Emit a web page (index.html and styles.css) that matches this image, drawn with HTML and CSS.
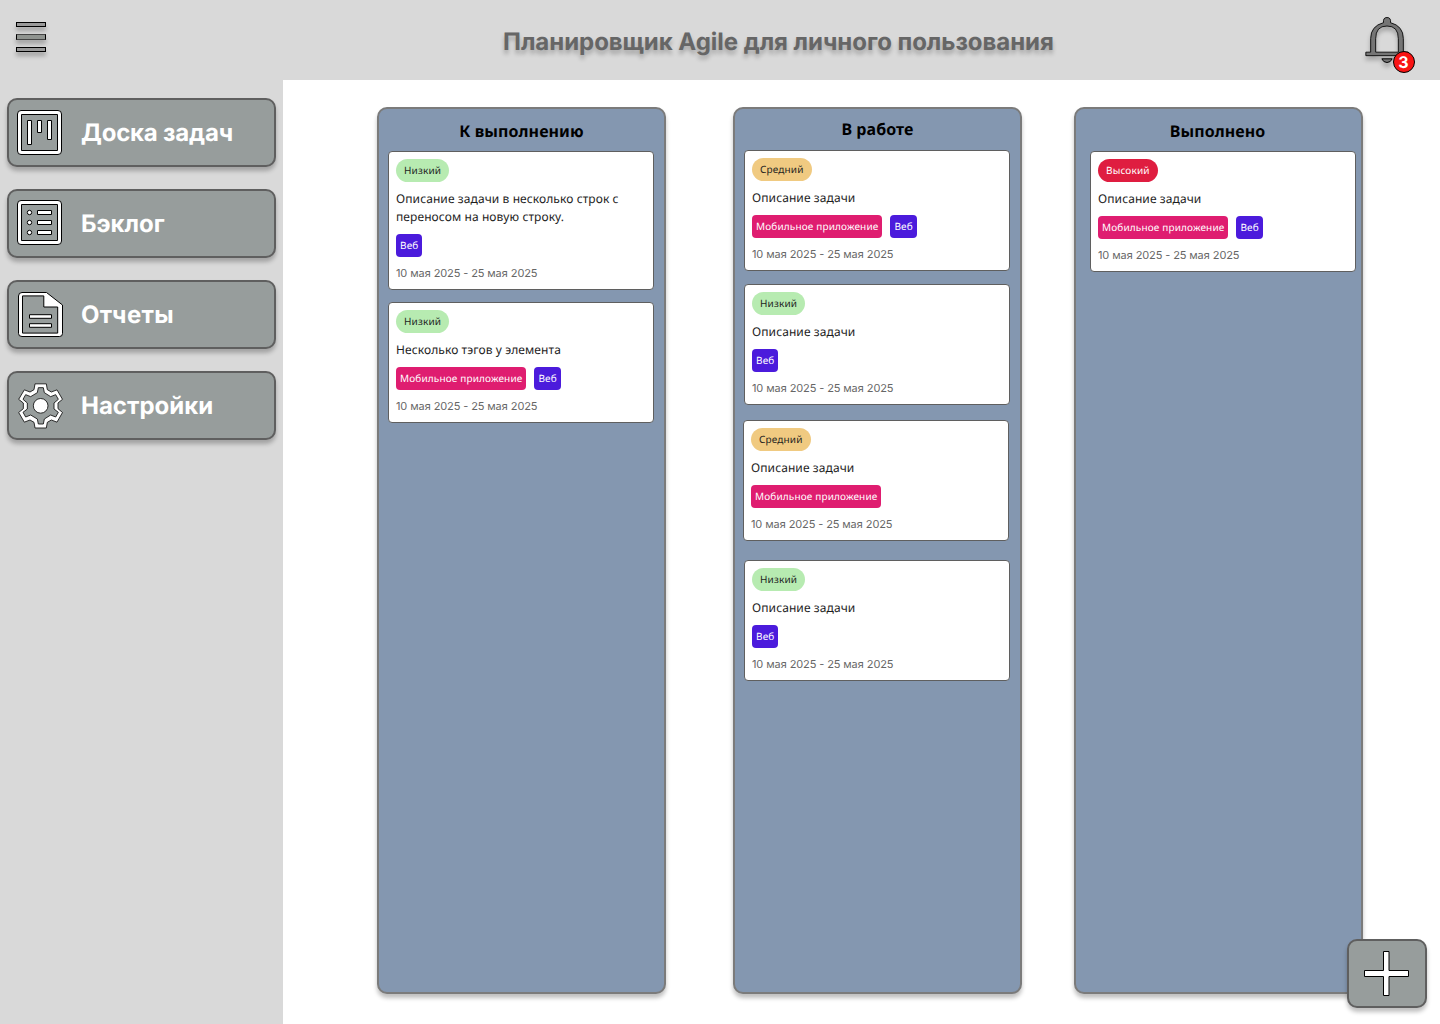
FILE: index.html
```html
<!DOCTYPE html>
<html lang="ru">
<head>
<meta charset="utf-8">
<title>Планировщик Agile</title>
<link rel="stylesheet" href="styles.css">
</head>
<body>
<header class="header">
  <button class="menu" aria-label="Меню"><span class="bar"></span><span class="bar bar-mid"></span><span class="bar"></span></button>
  <h1 class="title">Планировщик Agile для личного пользования</h1>
  <div class="bell">
    <svg width="44" height="54" viewBox="75 48 132 162">
      <path fill-rule="evenodd" fill="#757575" stroke="#000" stroke-width="2.600" d="M77.500 156.500H92V116Q92 78 130.500 68Q128.500 52.500 141 52.500Q153.500 52.500 151.500 68Q190 78 190 116V156.500H204.500V167H77.500Z M107 156.500H175V116Q175 78 141 78Q107 78 107 116Z"/>
      <path fill="#757575" stroke="#000" stroke-width="3" d="M125.500 176.500H156.500Q152 187.500 141 187.500Q130 187.500 125.500 176.500Z"/>
    </svg>
    <span class="count">3</span>
  </div>
</header>
<div class="body">
  <nav class="sidebar">
    <a class="nav-item">
      <svg class="icon" width="46" height="46" viewBox="0 0 46 46">
        <g class="shape"><path fill-rule="evenodd" d="M4 .5H41Q44.500 .5 44.500 4V41Q44.500 44.500 41 44.500H4Q.5 44.500 .5 41V4Q.5 .5 4 .5ZM4.500 4.500V40.500H40.500V4.500Z"/>
        <path d="M10.500 10.500h4v24h-4zM20.500 10.500h4v12h-4zM30.500 10.500h4v19h-4z"/></g>
      </svg>
      <span class="tight">Доска задач</span>
    </a>
    <a class="nav-item">
      <svg class="icon lift" width="46" height="46" viewBox="0 0 46 46">
        <g class="shape"><path fill-rule="evenodd" d="M4 .5H41Q44.500 .5 44.500 4V41Q44.500 44.500 41 44.500H4Q.5 44.500 .5 41V4Q.5 .5 4 .5ZM4.500 4.500V40.500H40.500V4.500Z"/>
        <path d="M20.500 10.500h14v4h-14zM20.500 20.500h14v4h-14zM20.500 30.500h14v4h-14z"/>
        <circle cx="12.500" cy="12.500" r="2.200"/><circle cx="12.500" cy="22.500" r="2.200"/><circle cx="12.500" cy="32.500" r="2.200"/></g>
      </svg>
      <span>Бэклог</span>
    </a>
    <a class="nav-item">
      <svg class="icon drop" width="47" height="46" viewBox="-1 0 47 46">
        <g class="shape"><path fill-rule="evenodd" d="M4 .5H28.500L44.500 13V41.500Q44.500 44.500 41.500 44.500H4Q.5 44.500 .5 41.500V4Q.5 .5 4 .5ZM4.500 3.900V41.100H39.700V15H25.800V3.900Z"/>
        <path d="M11.500 22.700h22v3.600h-22zM11.500 31.700h22v3.600h-22z"/></g>
      </svg>
      <span class="loose">Отчеты</span>
    </a>
    <a class="nav-item">
      <svg class="icon drop" width="47" height="47" viewBox="51 68 141 141">
        <g class="gear"><path fill-rule="evenodd" d="M105 70.500H139L142 88L154 95L171 88.500L187.500 117L174 128V145L187.500 156.500L171 185.500L154 179L142 186L139 203H105L102 186L90 179L73 185.500L56 156.500L70 145V128L56 117L73 88.500L90 95L102 88ZM115 82L112 97L92 109L77 103L69 117L82 128V146L69 156L77 170L92 164L112 176L115 191H130L133 176L152 164L167 170L175 156L162 146V128L175 117L167 103L152 109L133 97L130 82Z"/>
        <circle cx="122" cy="136.500" r="22"/></g>
      </svg>
      <span>Настройки</span>
    </a>
  </nav>
  <main class="board">
    <section class="column">
      <h2 class="column-title">К выполнению</h2>
      <article class="card">
        <span class="priority low">Низкий</span>
        <p class="text">Описание задачи в несколько строк с переносом на новую строку.</p>
        <div class="tags"><span class="tag web">Веб</span></div>
        <div class="dates">10 <span class="month">мая</span> 2025 - 25 <span class="month">мая</span> 2025</div>
      </article>
      <article class="card gap-s">
        <span class="priority low">Низкий</span>
        <p class="text">Несколько тэгов у элемента</p>
        <div class="tags"><span class="tag mobile">Мобильное приложение</span><span class="tag web">Веб</span></div>
        <div class="dates">10 <span class="month">мая</span> 2025 - 25 <span class="month">мая</span> 2025</div>
      </article>
    </section>
    <section class="column column-work">
      <h2 class="column-title">В работе</h2>
      <article class="card">
        <span class="priority medium">Средний</span>
        <p class="text">Описание задачи</p>
        <div class="tags"><span class="tag mobile">Мобильное приложение</span><span class="tag web">Веб</span></div>
        <div class="dates">10 <span class="month">мая</span> 2025 - 25 <span class="month">мая</span> 2025</div>
      </article>
      <article class="card gap-m">
        <span class="priority low">Низкий</span>
        <p class="text">Описание задачи</p>
        <div class="tags"><span class="tag web">Веб</span></div>
        <div class="dates">10 <span class="month">мая</span> 2025 - 25 <span class="month">мая</span> 2025</div>
      </article>
      <article class="card gap-l">
        <span class="priority medium">Средний</span>
        <p class="text">Описание задачи</p>
        <div class="tags"><span class="tag mobile">Мобильное приложение</span></div>
        <div class="dates">10 <span class="month">мая</span> 2025 - 25 <span class="month">мая</span> 2025</div>
      </article>
      <article class="card gap-xl">
        <span class="priority low">Низкий</span>
        <p class="text">Описание задачи</p>
        <div class="tags"><span class="tag web">Веб</span></div>
        <div class="dates">10 <span class="month">мая</span> 2025 - 25 <span class="month">мая</span> 2025</div>
      </article>
    </section>
    <section class="column column-done">
      <h2 class="column-title">Выполнено</h2>
      <article class="card">
        <span class="priority high">Высокий</span>
        <p class="text">Описание задачи</p>
        <div class="tags"><span class="tag mobile">Мобильное приложение</span><span class="tag web">Веб</span></div>
        <div class="dates">10 <span class="month">мая</span> 2025 - 25 <span class="month">мая</span> 2025</div>
      </article>
    </section>
  </main>
</div>
<button class="add" aria-label="Добавить задачу">
  <svg width="46" height="46" viewBox="0 0 46 46"><path fill="#fff" stroke="#000" d="M19.500 .5h5.500v19h19.500v6h-19.500v19h-5.500v-19H.5v-6h19z"/></svg>
</button>
</body>
</html>
```
FILE: styles.css
```css
* { box-sizing: border-box; }
body {
  margin: 0;
  width: 1440px;
  height: 1024px;
  overflow: hidden;
  background: #fff;
  font-family: "Noto Sans", sans-serif;
  text-rendering: geometricPrecision;
}
button { font: inherit; }
h1, h2, p { margin: 0; }

.header {
  display: flex;
  height: 80px;
  padding: 16px 22px 0 16px;
  background: #d9d9d9;
}
.menu {
  display: flex;
  flex-direction: column;
  gap: 7px;
  width: 30px;
  padding: 6px 0 0;
  border: 0;
  background: none;
}
.bar {
  height: 5px;
  border: 1px solid #000;
  background: #999;
  box-shadow: 0 4px 4px rgba(0, 0, 0, .25);
}
.bar-mid { height: 6px; border-color: #444 #000; background: #8f938f; }
.title {
  padding-top: 11px;
  margin-left: 457px;
  font: 700 24px/30px Inter, sans-serif;
  letter-spacing: -.04px;
  color: #666;
  white-space: nowrap;
  text-shadow: 0 4px 4px rgba(0, 0, 0, .25);
}
.bell { position: relative; width: 54px; height: 60px; margin-left: auto; margin-right: -1px; }
.bell svg { display: block; filter: drop-shadow(0 4px 2px rgba(0, 0, 0, .25)); }
.count {
  position: absolute;
  left: 28px;
  top: 35px;
  width: 22px;
  height: 22px;
  padding-right: 1px;
  border: 1px solid #000;
  border-radius: 50%;
  background: #f91414;
  color: #fff;
  font: 700 16px/20px Inter, sans-serif;
  text-align: center;
}

.body { display: flex; height: 944px; }
.sidebar {
  display: flex;
  flex-direction: column;
  gap: 22px;
  width: 283px;
  padding: 18px 7px;
  background: #d9d9d9;
}
.nav-item {
  display: flex;
  align-items: flex-start;
  width: 269px;
  height: 69px;
  padding: 10px 8px;
  border: 2px solid #5f5f5f;
  border-radius: 10px;
  background: #979d9c;
  box-shadow: 0 4px 4px rgba(0, 0, 0, .25);
  color: #fff;
  font: 700 24px/45px Inter, sans-serif;
}
.nav-item span { flex: none; }
.tight { letter-spacing: -.2px; }
.loose { letter-spacing: .35px; }
.icon { flex: none; width: 46px; margin-right: 18px; }
.lift { margin-top: -1px; }
.drop { width: 47px; margin-right: 17px; }
.shape { fill: #fff; stroke: #000; stroke-width: 1; }
.gear { fill: #fff; stroke: #111; stroke-width: 2.600; }

.board { display: flex; padding: 27px 0 0 94px; }
.column {
  width: 289px;
  height: 887px;
  padding: 10px 9px 0;
  border: 2px solid #7b7b7b;
  border-radius: 10px;
  background: #8497b0;
  box-shadow: 0 4px 4px rgba(0, 0, 0, .25);
}
.column-work { margin-left: 67px; padding-top: 8px; }
.column-done { margin-left: 52px; padding-left: 14px; }
.column-title {
  width: 267px;
  height: 32px;
  font: 700 16px/24px "Noto Sans", sans-serif;
  letter-spacing: .07px;
  text-align: center;
  color: #000;
}
.column-work .column-title { height: 33px; }
.column-done .column-title { margin-left: -6px; }
.card {
  display: flex;
  flex-direction: column;
  align-items: flex-start;
  gap: 8px;
  width: 266px;
  padding: 7px;
  border: 1px solid #5f5f5f;
  border-radius: 4px;
  background: #fff;
}
.gap-s { margin-top: 12px; }
.gap-m { margin-top: 13px; }
.gap-l { margin: 15px 0 0 -1px; }
.gap-xl { margin-top: 19px; }
.priority {
  height: 23px;
  padding: 0 8px;
  border-radius: 12px;
  font-size: 10px;
  line-height: 23px;
  letter-spacing: .15px;
  color: #1e1e1e;
}
.low { background: #b7ebb1; }
.medium { background: #f0ca81; }
.high { background: #df1d40; color: #fff; }
.text { font-size: 12px; line-height: 18px; letter-spacing: .09px; color: #1e1e1e; }
.tags { display: flex; gap: 8px; }
.tag {
  height: 23px;
  padding: 0 4px;
  border-radius: 4px;
  font-size: 10px;
  line-height: 23px;
  letter-spacing: .15px;
  color: #fff;
}
.web { background: #4b1bdc; }
.mobile { background: #df1d70; }
.dates {
  height: 17px;
  font: 11px/17px Inter, sans-serif;
  letter-spacing: -.12px;
  color: #666;
  white-space: nowrap;
}
.month { font-family: "Noto Sans", sans-serif; }

.add {
  position: absolute;
  left: 1347px;
  top: 939px;
  width: 80px;
  height: 69px;
  padding: 10px 0 0 15px;
  border: 2px solid #5f5f5f;
  border-radius: 10px;
  background: #979d9c;
  box-shadow: 0 4px 4px rgba(0, 0, 0, .25);
  display: flex;
  align-items: flex-start;
}
```
